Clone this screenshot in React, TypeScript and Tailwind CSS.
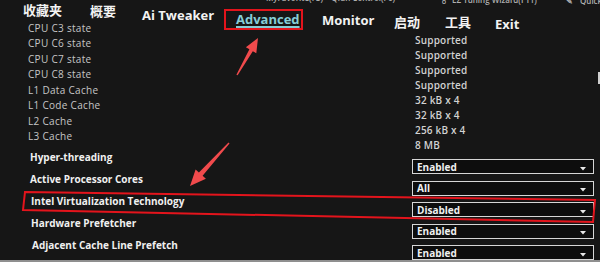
import React from "react";

const upperLabels = [
  "CPU C3 state",
  "CPU C6 state",
  "CPU C7 state",
  "CPU C8 state",
  "L1 Data Cache",
  "L1 Code Cache",
  "L2 Cache",
  "L3 Cache",
];
const upperValues = [
  "Supported",
  "Supported",
  "Supported",
  "Supported",
  "32 kB x 4",
  "32 kB x 4",
  "256 kB x 4",
  "8 MB",
];
const lowerLabels = [
  "Hyper-threading",
  "Active Processor Cores",
  "Intel Virtualization Technology",
  "Hardware Prefetcher",
  "Adjacent Cache Line Prefetch",
];
const dropValues = ["Enabled", "All", "Disabled", "Enabled", "Enabled"];

function Dropdown({ value }: { value: string }) {
  return (
    <div className="h-[15px] w-[182px] border border-[#d6d6d6] bg-[#0d0d0d] flex items-center justify-between pl-[4px] pr-[7px]">
      <span className="text-[10px] font-bold text-[#f0f0f0] leading-none">{value}</span>
      <svg width="6" height="4" viewBox="0 0 6 4" className="mt-[4px]">
        <polygon points="0,0 6,0 3,3.5" fill="#e8e8e8" />
      </svg>
    </div>
  );
}

export default function App() {
  return (
    <div
      className="relative w-[600px] h-[262px] overflow-hidden bg-[#161616] flex flex-col"
      style={{ fontFamily: '"Open Sans", "Noto Sans CJK SC", sans-serif' }}
    >
      {/* top strip, cut off */}
      <div className="h-[5px] overflow-hidden shrink-0">
        <div className="flex items-start text-[8px] leading-[10px] text-[#b0b0b0] font-semibold whitespace-nowrap">
          <span className="w-[395px] shrink-0 text-right -mt-[7px]">MyFavorite(F3)&nbsp;&nbsp;&nbsp;&nbsp;Qfan Control(F6)</span>
          <span className="w-[45px] shrink-0" />
          <span className="w-[12px] shrink-0 -mt-[5px]">♁</span>
          <span className="w-[114px] shrink-0 -mt-[5px]">EZ Tuning Wizard(F11)</span>
          <span className="w-[14px] shrink-0 -mt-[4px]">✎</span>
          <span className="shrink-0 -mt-[4px]">Quick Note(F9)</span>
        </div>
      </div>

      {/* menu */}
      <div className="h-[30px] shrink-0 flex items-start pl-[23px] text-[13px] leading-[16px] font-bold text-[#f2f2f2] whitespace-nowrap">
        <span className="w-[67px] shrink-0 -mt-[3px]">收藏夹</span>
        <span className="w-[52px] shrink-0 -mt-[2px]">概要</span>
        <span className="w-[82px] shrink-0 mt-[1.5px]">Ai Tweaker</span>
        <span className="w-[79px] shrink-0 h-[21px] mt-[4px] border-2 border-[#e3141c] pl-[10px] flex items-center pb-[2px]">
          <span className="text-[#86cdd6] underline underline-offset-2 decoration-[1.5px]">Advanced</span>
        </span>
        <span className="w-[91px] shrink-0 pl-[19px] mt-[7px]">Monitor</span>
        <span className="w-[51px] shrink-0 mt-[8.5px]">启动</span>
        <span className="w-[50px] shrink-0 mt-[9px]">工具</span>
        <span className="shrink-0 mt-[10.5px]">Exit</span>
      </div>

      {/* content */}
      <div className="-mt-[15px] flex">
        <div className="w-[412px] shrink-0 pl-[28px]">
          {upperLabels.map((l) => (
            <div key={l} className="h-[15.5px] flex items-center text-[10px] text-[#c6c6c6] tracking-[0.3px] leading-none">
              {l}
            </div>
          ))}
          <div className="h-[2px]" />
          {lowerLabels.map((l, i) => (
            <div
              key={l}
              className={`h-[22px] flex items-center text-[10px] font-bold text-[#f0f0f0] leading-none ${
                i < 2 ? "pl-[2px]" : i < 4 ? "pl-[3px]" : "pl-[4px]"
              }`}
            >
              {l}
            </div>
          ))}
        </div>
        <div className="w-[184px] shrink-0 pt-[12.5px]">
          {upperValues.map((v, i) => (
            <div key={i} className="h-[15px] flex items-center pl-[3px] text-[10px] font-semibold text-[#d2d2d2] tracking-[0.2px] leading-none">
              {v}
            </div>
          ))}
          <div className="flex flex-col gap-[6.5px] mt-[6.5px]">
            {dropValues.map((v, i) => (
              <Dropdown key={i} value={v} />
            ))}
          </div>
        </div>
      </div>

      <div className="mt-auto h-[3px] bg-[#8f8f8f] shrink-0" />

      {/* scrollbar thumb */}
      <div className="absolute right-0 top-[72px] w-[2px] h-[12px] bg-[#cfcfcf]" />

      {/* annotations */}
      <svg className="absolute inset-0 pointer-events-none" width="600" height="262" viewBox="0 0 600 262">
        <polygon
          points="25,192 595,200 593,222 23,210"
          fill="none"
          stroke="#e3141c"
          strokeWidth="2"
        />
        <polygon
          points="258,38 256.3,53.2 252.8,51.2 237.6,75.3 236.4,74.7 249.4,49.2 245.9,47.2"
          fill="#f04a4c"
        />
        <polygon
          points="190,186 205.9,178.8 202.6,175.8 229.5,143.5 228.5,142.5 198.9,172.5 195.6,169.4"
          fill="#f04a4c"
        />
      </svg>
    </div>
  );
}
